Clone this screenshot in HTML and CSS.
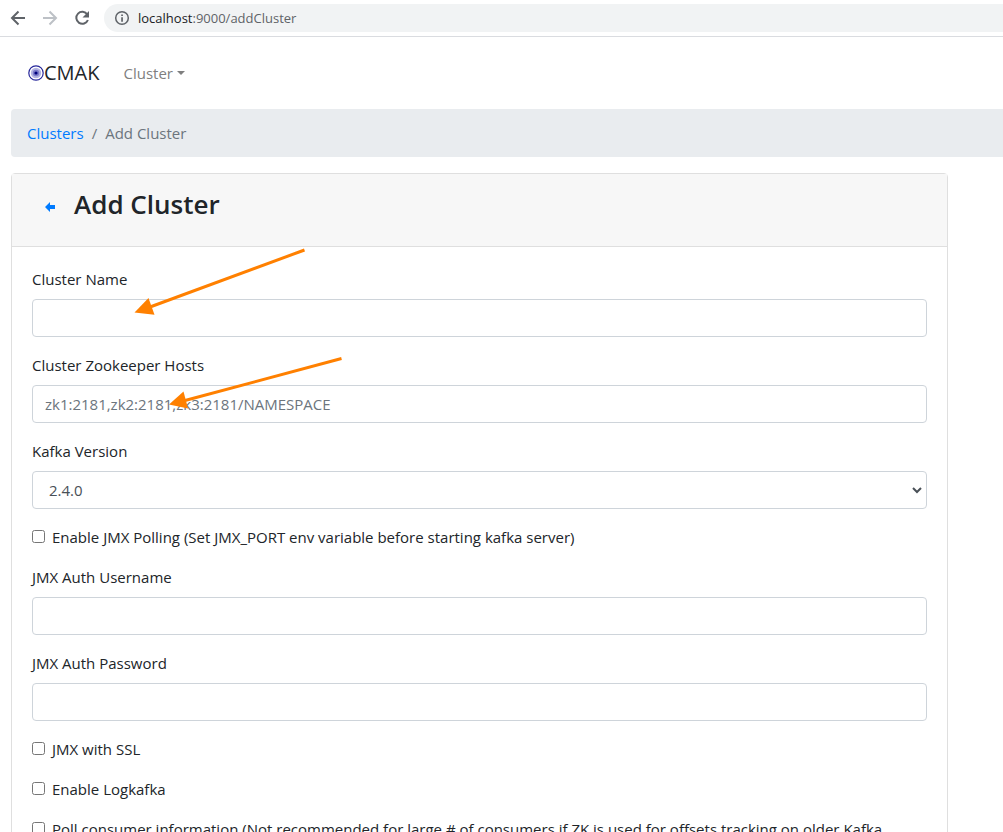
FILE: index.html
```html
<!DOCTYPE html>
<html lang="en">
<head>
<meta charset="utf-8">
<title>CMAK - Add Cluster</title>
<link rel="stylesheet" href="styles.css">
</head>
<body>
<div class="toolbar">
  <button class="tool" type="button" aria-label="Back"><svg width="16" height="16" viewBox="0 0 16 16"><path d="M15 8H2M8.500 1.500L2 8l6.500 6.500" fill="none" stroke="#5f6368" stroke-width="2"/></svg></button>
  <button class="tool" type="button" aria-label="Forward"><svg width="16" height="16" viewBox="0 0 16 16"><path d="M1 8h13M7.500 1.500L14 8l-6.500 6.500" fill="none" stroke="#bdc1c6" stroke-width="2"/></svg></button>
  <button class="tool" type="button" aria-label="Reload"><svg width="16" height="16" viewBox="0 0 16 16"><path d="M13.300 4.500A6 6 0 1 0 13.900 10" fill="none" stroke="#5f6368" stroke-width="2"/><path d="M15 1v6.500H8.500z" fill="#5f6368"/></svg></button>
  <div class="address">
    <svg width="16" height="16" viewBox="0 0 16 16"><circle cx="8" cy="8" r="6.300" fill="none" stroke="#5f6368" stroke-width="1.500"/><path d="M7.200 4.500h1.700v1.600H7.200zM7.200 7.200h1.700v4.500H7.200z" fill="#5f6368"/></svg>
    <span class="url"><span class="host">localhost</span>:9000/addCluster</span>
  </div>
</div>
<nav class="navbar">
  <a class="brand" href="#"><svg width="16" height="16" viewBox="0 0 16 16"><circle cx="8" cy="8" r="7.200" fill="#fff" stroke="#26269a" stroke-width="1.200"/><circle cx="8" cy="8" r="5.200" fill="#b4b4e2"/><circle cx="8" cy="8" r="3.200" fill="#7c7cca"/><circle cx="8" cy="8" r="1.600" fill="#00007c"/></svg>CMAK</a>
  <button class="menu" type="button">Cluster<span class="caret"></span></button>
</nav>
<ol class="breadcrumb">
  <li><a href="#">Clusters</a></li>
  <li class="slash">/</li>
  <li>Add Cluster</li>
</ol>
<main class="card">
  <header class="card-header">
    <a class="back" href="#" aria-label="Back to clusters"><svg width="10" height="10" viewBox="0 0 10 10"><path d="M0 5l5-5v3h5v4H5v3z" fill="#007bff"/></svg></a>
    <h1>Add Cluster</h1>
  </header>
  <form class="card-body">
    <div class="group"><label for="name">Cluster Name</label><input class="control" id="name" type="text"></div>
    <div class="group"><label for="hosts">Cluster Zookeeper Hosts</label><input class="control" id="hosts" type="text" placeholder="zk1:2181,zk2:2181,zk3:2181/NAMESPACE"></div>
    <div class="group"><label for="version">Kafka Version</label>
      <div class="select-wrap"><select class="control select" id="version"><option>2.4.0</option></select><svg class="chevron" width="10" height="7" viewBox="0 0 10 7"><path d="M1 1l4 4 4-4" fill="none" stroke="#495057" stroke-width="2"/></svg></div></div>
    <div class="check"><input id="polling" type="checkbox"><label for="polling">Enable JMX Polling (Set JMX_PORT env variable before starting kafka server)</label></div>
    <div class="group"><label for="user">JMX Auth Username</label><input class="control" id="user" type="text"></div>
    <div class="group"><label for="pass">JMX Auth Password</label><input class="control" id="pass" type="password"></div>
    <div class="check"><input id="ssl" type="checkbox"><label for="ssl">JMX with SSL</label></div>
    <div class="check"><input id="logkafka" type="checkbox"><label for="logkafka">Enable Logkafka</label></div>
    <div class="check"><input id="consumers" type="checkbox"><label for="consumers">Poll consumer information (Not recommended for large # of consumers if ZK is used for offsets tracking on older Kafka</label></div>
  </form>
</main>
<svg class="arrows" width="360" height="420" viewBox="0 0 360 420">
  <g stroke="#ff8000" stroke-width="3"><path d="M304.500 250L150 307"/><path d="M341.500 358.500L185 400.500"/></g>
  <g fill="#ff8000"><path d="M134.500 312.500L148.500 298l6 16.700z"/><path d="M169 404.500L183.500 391.500l4.500 17z"/></g>
</svg>
</body>
</html>
```
FILE: styles.css
```css
* { box-sizing: border-box; }
body {
  position: relative;
  height: 100vh;
  margin: 0;
  overflow: hidden;
  background: #fff;
  color: #212529;
  font: 15px/24px "Open Sans", "Noto Sans", sans-serif;
}
a { color: #007bff; text-decoration: none; }
button { padding: 0; border: 0; background: none; font: inherit; }
svg { display: block; flex: none; }
.toolbar {
  display: flex;
  align-items: center;
  gap: 16px;
  height: 37px;
  padding-left: 10px;
  border-bottom: 1px solid #dadce0;
}
.tool { width: 16px; }
.address {
  display: flex;
  flex: 1;
  align-items: center;
  gap: 8px;
  height: 28px;
  margin-left: -2px;
  padding-left: 10px;
  border-radius: 14px 0 0 14px;
  background: #f1f3f4;
  color: #5f6368;
  font-size: 13px;
}
.host { color: #202124; }
.navbar {
  display: flex;
  align-items: center;
  gap: 24px;
  height: 72px;
  padding-left: 28px;
}
.brand { display: flex; align-items: center; color: #212529; font-size: 20px; }
.menu { display: flex; align-items: center; gap: 4px; color: #7f7f7f; }
.caret { border: 4px solid transparent; border-top-color: #7f7f7f; border-bottom: 0; }
.breadcrumb {
  display: flex;
  gap: 8px;
  margin: 0 0 16px 11px;
  padding: 12px 16px;
  border-radius: 4px 0 0 4px;
  background: #e9ecef;
  color: #6c757d;
  list-style: none;
}
.card { margin: 0 55px 0 11px; border: 1px solid #dfdfdf; border-radius: 4px; }
.card-header {
  display: flex;
  gap: 19px;
  padding: 12px 33px 24px;
  border-bottom: 1px solid #dfdfdf;
  background: #f7f7f7;
}
.back { align-self: center; padding-top: 6px; }
h1 { margin: 0; font-size: 26px; font-weight: 600; line-height: 36px; }
.card-body { display: flex; flex-direction: column; gap: 16px; padding: 20px; }
.group { display: flex; flex-direction: column; gap: 8px; }
.control {
  width: 100%;
  height: 38px;
  padding: 6px 12px;
  border: 1px solid #ced4da;
  border-radius: 4px;
  background: #fff;
  color: #495057;
  font: inherit;
}
.control::placeholder { color: #6c757d; opacity: 1; }
.select-wrap { position: relative; }
.select { display: block; padding-left: 16px; appearance: none; }
.chevron { position: absolute; top: 16px; right: 5px; }
.check { display: flex; align-items: center; gap: 7px; white-space: nowrap; }
.check input { width: 13px; height: 13px; margin: 0 0 2px; }
.arrows { position: absolute; top: 0; left: 0; pointer-events: none; }
```
